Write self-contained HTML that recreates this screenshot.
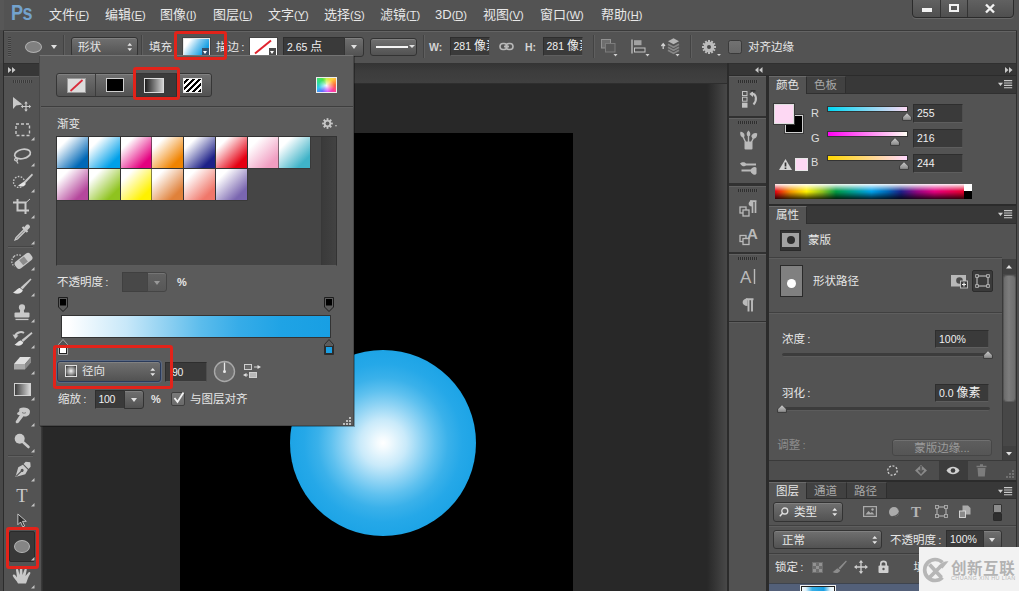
<!DOCTYPE html>
<html lang="zh-CN">
<head>
<meta charset="utf-8">
<title>Photoshop 渐变填充</title>
<style>
*{box-sizing:border-box;margin:0;padding:0}
html,body{width:1019px;height:591px;overflow:hidden;background:#535353}
body{position:relative;font-family:"Liberation Sans","Noto Sans CJK SC",sans-serif;font-size:11.500px;color:#e6e6e6;line-height:1}
.a{position:absolute}
.t{position:absolute;white-space:nowrap;line-height:14px;height:14px}
.inp{position:absolute;font-size:10.500px;background:#3a3a3a;border:1px solid #2e2e2e;border-bottom-color:#5e5e5e;border-right-color:#4e4e4e;color:#f0f0f0;line-height:16px;padding-left:3px;white-space:nowrap;overflow:hidden}
.btn{position:absolute;background:linear-gradient(#707070,#525252);border:1px solid #333;border-radius:3px;box-shadow:inset 0 1px 0 rgba(255,255,255,.12)}
.tri{position:absolute;width:0;height:0;border-left:3px solid transparent;border-right:3px solid transparent;border-top:4px solid #e0e0e0}
svg{position:absolute;overflow:visible}
.mi{top:7px;font-size:13px;line-height:15px;height:15px;color:#e8e8e8}
.mi .k{font-size:11px}
.mi u{text-underline-offset:1px}
.red{border:3px solid #e2231a;border-radius:3px}
.sw{width:31px;height:30.800px;box-shadow:0 0 0 .6px #333}
.inp .c{font-size:12px}
.cl{margin-left:2.200px}
</style>
</head>
<body>
<svg width="0" height="0" style="left:0;top:0"><defs><linearGradient id="tg" x1="0" y1="0" x2="0" y2="1"><stop offset="0" stop-color="#cfcfcf"/><stop offset="1" stop-color="#868686"/></linearGradient></defs></svg>

<!-- ===== MENU BAR ===== -->
<div class="a" id="menubar" style="left:0;top:0;width:1019px;height:30px;background:#535353">
<div class="a" style="left:0;top:0;width:4px;height:30px;background:#575757"></div>
<div class="t" style="left:10.500px;top:0.500px;height:24px;line-height:24px;font-size:22px;font-weight:bold;color:#73a2cd;letter-spacing:-.5px;transform:scaleX(.82);transform-origin:0 0;font-family:'Liberation Sans',sans-serif">Ps</div>
<div class="t mi" style="left:49px">文件<span class="k">(<u>F</u>)</span></div>
<div class="t mi" style="left:105px">编辑<span class="k">(<u>E</u>)</span></div>
<div class="t mi" style="left:160px">图像<span class="k">(<u>I</u>)</span></div>
<div class="t mi" style="left:213px">图层<span class="k">(<u>L</u>)</span></div>
<div class="t mi" style="left:268px">文字<span class="k">(<u>Y</u>)</span></div>
<div class="t mi" style="left:324px">选择<span class="k">(<u>S</u>)</span></div>
<div class="t mi" style="left:380px">滤镜<span class="k">(<u>T</u>)</span></div>
<div class="t mi" style="left:435px">3D<span class="k">(<u>D</u>)</span></div>
<div class="t mi" style="left:483px">视图<span class="k">(<u>V</u>)</span></div>
<div class="t mi" style="left:540px">窗口<span class="k">(<u>W</u>)</span></div>
<div class="t mi" style="left:601px">帮助<span class="k">(<u>H</u>)</span></div>
<div class="a" style="left:912px;top:-1px;width:102px;height:19px;border:1px solid #2b2b2b;border-radius:0 0 4px 4px;background:linear-gradient(#616161,#4f4f4f);box-shadow:0 1px 0 rgba(255,255,255,.12)"></div>
<div class="a" style="left:940px;top:0;width:1px;height:17px;background:#333"></div>
<div class="a" style="left:967px;top:0;width:1px;height:17px;background:#333"></div>
<div class="a" style="left:922px;top:8px;width:10px;height:3.500px;background:#f2f2f2"></div>
<div class="a" style="left:948.500px;top:3.500px;width:10.500px;height:8.500px;border:2px solid #f2f2f2"></div>
<svg style="left:985px;top:4px" width="10" height="9" viewBox="0 0 10 9"><path d="M1 0.5 L9 8.5 M9 0.5 L1 8.5" stroke="#f2f2f2" stroke-width="2.4" fill="none"/></svg>
</div>

<!-- ===== OPTIONS BAR ===== -->
<div class="a" id="optbar" style="left:0;top:30px;width:1019px;height:33px;background:#535353">
<div class="a" style="left:0;top:0;width:3px;height:33px;background:#4b4b4b"></div><div class="a" style="left:3px;top:0;width:1px;height:33px;background:#2c2c2c"></div>
<div class="a" style="left:1017px;top:0;width:2px;height:33px;background:#4f4f4f"></div><div class="a" style="left:1016px;top:0;width:1px;height:33px;background:#2e2e2e"></div>
<div class="a" style="left:3px;top:0;width:1014px;height:1px;background:#3a3a3a"></div><div class="a" style="left:4px;top:1px;width:1012px;height:1px;background:#646464"></div>
<div class="a" style="left:4px;top:32.500px;width:1012px;height:.5px;background:#3a3a3a"></div>
<!-- gripper -->
<div class="a" style="left:8px;top:7px;width:3px;height:20px;background:repeating-linear-gradient(#3e3e3e 0 1px,#5e5e5e 1px 2px)"></div>
<!-- ellipse tool icon -->
<div class="a" style="left:25px;top:10.500px;width:17px;height:12px;border-radius:50%;background:#808080;border:1.300px solid #b0b0b0"></div>
<div class="tri" style="left:51px;top:15px"></div>
<div class="a" style="left:63px;top:5px;width:1px;height:23px;background:#434343"></div><div class="a" style="left:64px;top:5px;width:1px;height:23px;background:#5f5f5f"></div><div class="a" style="left:141px;top:5px;width:1px;height:23px;background:#434343"></div><div class="a" style="left:142px;top:5px;width:1px;height:23px;background:#5f5f5f"></div>
<!-- shape dropdown -->
<div class="btn" style="left:71px;top:7px;width:67px;height:20px"></div>
<div class="t" style="left:78px;top:10px">形状</div>
<svg style="left:127.3px;top:13.0px" width="5.500" height="8" viewBox="0 0 7 10"><path d="M3.5 0 L6.5 3.5 H0.5Z M3.5 10 L6.5 6.5 H0.5Z" fill="#e6e6e6"/></svg>
<div class="t" style="left:149px;top:10px">填充<span class="cl">:</span></div>
<!-- fill swatch -->
<div class="a" style="left:182.500px;top:8px;width:27px;height:17.500px;border:1px solid #e8e8e8;outline:1px solid #444;background:linear-gradient(125deg,#fff 18%,#7cc8ef 50%,#149fe3 80%)"></div>
<div class="a" style="left:202px;top:18px;width:7px;height:7px;background:#35506a"></div>
<div class="tri" style="left:203px;top:20.500px;border-width:3px 2.500px 0 2.500px;border-top-color:#fff"></div>
<div class="t" style="left:216px;top:10px">描边<span class="cl">:</span></div>
<!-- stroke swatch -->
<div class="a" style="left:250px;top:8px;width:27px;height:17.500px;border:1px solid #fff;outline:1px solid #444;background:#fff"></div>
<svg style="left:250px;top:8px" width="27" height="18" viewBox="0 0 27 18"><path d="M5 15.5 L21 2.5" stroke="#e0232e" stroke-width="2"/></svg>
<div class="a" style="left:269px;top:18px;width:7px;height:7px;background:#4a4a4a"></div>
<div class="tri" style="left:270px;top:20.500px;border-width:3px 2.500px 0 2.500px;border-top-color:#fff"></div>
<!-- size input -->
<div class="inp" style="left:283px;top:7px;width:62px;height:19.500px;line-height:18px">2.65 <span class="c">点</span></div>
<div class="btn" style="left:344px;top:7px;width:20px;height:19.500px;border-radius:0 3px 3px 0"></div>
<div class="tri" style="left:351px;top:15px"></div>
<!-- line style -->
<div class="btn" style="left:370px;top:8px;width:47px;height:18px"></div>
<div class="a" style="left:376px;top:16px;width:32px;height:2px;background:#f4f4f4"></div>
<div class="tri" style="left:409px;top:15px;border-width:3px 3px 0 3px"></div>
<div class="a" style="left:423px;top:5px;width:1px;height:23px;background:#434343"></div><div class="a" style="left:424px;top:5px;width:1px;height:23px;background:#5f5f5f"></div>
<div class="t" style="left:429px;top:10px;font-weight:bold;font-size:10.500px;color:#d4d4d4">W:</div>
<div class="inp" style="left:449.500px;top:7px;width:40.500px;height:18.500px;line-height:17px">281 <span class="c">像素</span></div>
<!-- link icon -->
<svg style="left:499px;top:12px" width="15" height="9" viewBox="0 0 15 9"><rect x="1" y="1.5" width="7" height="6" rx="3" fill="none" stroke="#b8b8b8" stroke-width="1.6"/><rect x="7" y="1.5" width="7" height="6" rx="3" fill="none" stroke="#b8b8b8" stroke-width="1.6"/><rect x="5" y="3.6" width="5" height="1.8" fill="#b8b8b8"/></svg>
<div class="t" style="left:525px;top:10px;font-weight:bold;font-size:10.500px;color:#d4d4d4">H:</div>
<div class="inp" style="left:542.500px;top:7px;width:40.500px;height:18.500px;line-height:17px">281 <span class="c">像素</span></div>
<div class="a" style="left:593px;top:5px;width:1px;height:23px;background:#434343"></div><div class="a" style="left:594px;top:5px;width:1px;height:23px;background:#5f5f5f"></div>
<!-- path ops icon -->
<svg style="left:601px;top:9px" width="18" height="18" viewBox="0 0 18 18"><rect x="0.500" y="0.500" width="9" height="8.500" fill="#6e6e6e" stroke="#929292"/><rect x="4.500" y="4.500" width="9.500" height="8.500" fill="#585858" stroke="#7c7c7c"/><path d="M12.500 15 h4 l-2 2.500z" fill="#d0d0d0"/></svg>
<!-- align icon -->
<svg style="left:631px;top:9px" width="18" height="18" viewBox="0 0 18 18"><path d="M1 0.500 V14.500" stroke="#c0c0c0" stroke-width="1.300"/><rect x="3" y="1.200" width="7.500" height="5" fill="#a2a2a2"/><rect x="3.500" y="9" width="10.500" height="4" fill="#4e4e4e" stroke="#c4c4c4"/><path d="M14.500 15 h4 l-2 2.500z" fill="#d0d0d0"/></svg>
<!-- arrange icon -->
<svg style="left:661px;top:8px" width="20" height="19" viewBox="0 0 20 19"><path d="M2.200 6.500 V11 M0.400 8 L2.200 5.800 L4 8" stroke="#d4d4d4" stroke-width="1.200" fill="none"/><path d="M12.500 0.300 L18 3.300 L12.500 6.300 L7 3.300Z" fill="#b4b4b4"/><path d="M7 6.300 L12.500 9.300 L18 6.300 M7 9.300 L12.500 12.300 L18 9.300 M7 12.300 L12.500 15.300 L18 12.300" stroke="#868686" stroke-width="1.700" fill="none"/><path d="M14.500 16 h4 l-2 2.500z" fill="#d0d0d0"/></svg>
<div class="a" style="left:690px;top:5px;width:1px;height:23px;background:#434343"></div><div class="a" style="left:691px;top:5px;width:1px;height:23px;background:#5f5f5f"></div>
<!-- gear -->
<svg style="left:701px;top:8.500px" width="16" height="16" viewBox="-8 -8 16 16"><g fill="#bcbcbc"><circle r="5.400"/><rect x="-1" y="-7" width="2" height="14" transform="rotate(0)"/><rect x="-1" y="-7" width="2" height="14" transform="rotate(30)"/><rect x="-1" y="-7" width="2" height="14" transform="rotate(60)"/><rect x="-1" y="-7" width="2" height="14" transform="rotate(90)"/><rect x="-1" y="-7" width="2" height="14" transform="rotate(120)"/><rect x="-1" y="-7" width="2" height="14" transform="rotate(150)"/></g><circle r="2" fill="#4a4a4a"/></svg>
<div class="a" style="left:717px;top:24px;width:0;height:0;border-left:2px solid transparent;border-right:2px solid transparent;border-top:2.500px solid #d0d0d0"></div>
<!-- checkbox -->
<div class="a" style="left:728px;top:9.500px;width:14px;height:14px;border:1px solid #3a3a3a;border-radius:2.500px;background:linear-gradient(#727272,#686868)"></div>
<div class="t" style="left:748px;top:10px">对齐边缘</div>
</div>

<!-- ===== WORK AREA ===== -->
<div class="a" id="work" style="left:38px;top:63px;width:691px;height:528px;background:#282828">
<div class="a" style="left:0;top:0;width:691px;height:1px;background:#2a2a2a"></div>
<div class="a" style="left:0;top:0;width:689px;height:20px;background:linear-gradient(#343434,#3c3c3c 40%,#404040)"></div>
<div class="a" style="left:0;top:20px;width:689px;height:1px;background:#2e2e2e"></div>
<!-- document -->
<div class="a" style="left:142px;top:70px;width:393px;height:458px;background:#000"></div>
<div class="a" style="left:252px;top:287px;width:186px;height:186px;border-radius:50%;background:radial-gradient(circle closest-side,#fff 0%,#f4fbfe 6%,#c9eafa 25%,#8ed3f4 42%,#5fc1ef 56%,#3ab1ea 70%,#25a8e8 85%,#1da4e6 100%)"></div>
<!-- v scrollbar -->
<div class="a" style="left:669px;top:21px;width:20px;height:507px;background:linear-gradient(90deg,#282828 0,#333 35%,#3f3f3f 70%,#484848 100%)"></div>
<div class="a" style="left:689px;top:0;width:2px;height:528px;background:linear-gradient(90deg,#3a3a3a,#2c2c2c)"></div>
</div>

<!-- ===== TOOLBAR ===== -->
<div class="a" id="tools" style="left:0;top:63px;width:40.500px;height:528px;background:#535353">
<div class="a" style="left:0;top:0;width:3px;height:528px;background:#484848"></div><div class="a" style="left:3px;top:0;width:1px;height:528px;background:#2c2c2c"></div>
<div class="a" style="left:4px;top:0;width:36.500px;height:13px;background:#373737;border-top:1px solid #303030"></div>
<svg style="left:8px;top:4px" width="8" height="6" viewBox="0 0 8 6"><path d="M0 0 L3.5 3 L0 6Z M4 0 L7.5 3 L4 6Z" fill="#c8c8c8"/></svg>
<div class="a" style="left:4px;top:13px;width:36.500px;height:1px;background:#626262"></div>
<div class="a" style="left:13px;top:17px;width:19px;height:3px;background:repeating-linear-gradient(90deg,#3a3a3a 0 1px,#5f5f5f 1px 2px)"></div>
<div class="a" style="left:40.500px;top:0px;width:2px;height:528px;background:linear-gradient(90deg,#3e3e3e,#2c2c2c)"></div>
<svg style="left:13px;top:34px" width="18" height="14" viewBox="0 0 18 14"><path d="M0 0 L0 12 L3.2 8.6 L9.5 7.5Z" fill="#c9c9c9"/><path d="M13 5.5 V13.5 M9 9.5 H17" stroke="#c9c9c9" stroke-width="1.2"/><path d="M13 4.3 l1.8 2.2 h-3.6z M13 14.7 l1.8 -2.2 h-3.6z M7.8 9.5 l2.2 -1.8 v3.6z M18.2 9.5 l-2.2 -1.8 v3.6z" fill="#c9c9c9"/></svg>
<svg style="left:14.500px;top:60px" width="16" height="14" viewBox="0 0 16 14"><rect x="1" y="1" width="13.5" height="11.5" fill="none" stroke="#c9c9c9" stroke-width="1.4" stroke-dasharray="3 2"/></svg>
<svg style="left:30.500px;top:73.5px" width="3.500" height="3.500" viewBox="0 0 4 4"><path d="M4 0 V4 H0Z" fill="#c4c4c4"/></svg>
<svg style="left:12px;top:85px" width="20" height="16" viewBox="0 0 20 16"><ellipse cx="10.5" cy="6" rx="8" ry="4.6" fill="none" stroke="#c9c9c9" stroke-width="1.7" transform="rotate(-12 10.5 6)"/><path d="M4.5 9.5 C2 10.5 2 13 4.5 12.8 C6 12.5 5.5 10.5 4 11 M4.5 12.8 L6 15.5" fill="none" stroke="#c9c9c9" stroke-width="1.3"/></svg>
<svg style="left:30.500px;top:99.5px" width="3.500" height="3.500" viewBox="0 0 4 4"><path d="M4 0 V4 H0Z" fill="#c4c4c4"/></svg>
<svg style="left:12px;top:110px" width="22" height="16" viewBox="0 0 22 16"><ellipse cx="7" cy="9" rx="5.5" ry="5.5" fill="none" stroke="#c9c9c9" stroke-width="1.3" stroke-dasharray="1.6 1.4"/><path d="M20 0.5 L11.5 9 L13 10.5 L21 2Z" fill="#c9c9c9"/><path d="M12 9 C10 9.5 8.5 11.5 6 12.5 C9 14.5 13 13.5 13.8 10.8Z" fill="#e6e6e6"/></svg>
<svg style="left:30.500px;top:125.5px" width="3.500" height="3.500" viewBox="0 0 4 4"><path d="M4 0 V4 H0Z" fill="#c4c4c4"/></svg>
<svg style="left:13px;top:136px" width="18" height="16" viewBox="0 0 18 16"><path d="M4.5 0 V11.5 H16 M0 3.5 H12.5 V15" fill="none" stroke="#c9c9c9" stroke-width="2"/><path d="M17 0 L12.5 4" stroke="#c9c9c9" stroke-width="1"/></svg>
<svg style="left:30.500px;top:151.5px" width="3.500" height="3.500" viewBox="0 0 4 4"><path d="M4 0 V4 H0Z" fill="#c4c4c4"/></svg>
<svg style="left:13px;top:161px" width="18" height="17" viewBox="0 0 18 17"><path d="M13.5 0.8 C15.5 -0.5 18 2 16.5 4 L14 6.5 L11 3.5Z" fill="#c9c9c9"/><path d="M9.5 3 L14.5 8" stroke="#c9c9c9" stroke-width="2"/><path d="M11 5.5 L3 13.5 L2 16 L4.5 15 L12.5 7Z" fill="#8a8a8a" stroke="#c9c9c9" stroke-width="1.2"/></svg>
<svg style="left:30.500px;top:177.5px" width="3.500" height="3.500" viewBox="0 0 4 4"><path d="M4 0 V4 H0Z" fill="#c4c4c4"/></svg>
<div class="a" style="left:8px;top:183px;width:25px;height:1px;background:#454545"></div><div class="a" style="left:8px;top:184px;width:25px;height:1px;background:#606060"></div>
<svg style="left:11px;top:190px" width="22" height="17" viewBox="0 0 22 17"><g transform="rotate(-38 12 8)"><rect x="3" y="4" width="19" height="8.5" rx="3" fill="#c9c9c9"/><rect x="9.5" y="5" width="6" height="6.5" fill="#8c8c8c"/></g><path d="M3 3.5 C0 6 0 11 3.5 13.5" fill="none" stroke="#c9c9c9" stroke-width="1.2" stroke-dasharray="1.5 1.3"/><path d="M3 3.5 C5 1.5 8 1.5 10 2.5" fill="none" stroke="#c9c9c9" stroke-width="1.2" stroke-dasharray="1.5 1.3"/></svg>
<svg style="left:30.500px;top:203.5px" width="3.500" height="3.500" viewBox="0 0 4 4"><path d="M4 0 V4 H0Z" fill="#c4c4c4"/></svg>
<svg style="left:12px;top:215px" width="20" height="17" viewBox="0 0 20 17"><path d="M18.5 0.5 L8.5 9.5 L10.5 11.5 L19.5 1.5Z" fill="#c9c9c9"/><path d="M8 10 C5.5 10 4.5 12.5 1 14.5 C5 16.8 10 15.5 10.8 12.3Z" fill="#e2e2e2"/></svg>
<svg style="left:30.500px;top:229.5px" width="3.500" height="3.500" viewBox="0 0 4 4"><path d="M4 0 V4 H0Z" fill="#c4c4c4"/></svg>
<svg style="left:13px;top:241px" width="18" height="17" viewBox="0 0 18 17"><circle cx="9" cy="3.400" r="3.100" fill="#c9c9c9"/><path d="M7.300 5 L6.800 9 H11.200 L10.700 5Z" fill="#c9c9c9"/><rect x="1.500" y="8.500" width="15" height="5" rx="1" fill="#c9c9c9"/><rect x="2.500" y="14.800" width="13" height="1.300" fill="#c9c9c9"/></svg>
<svg style="left:30.500px;top:255.5px" width="3.500" height="3.500" viewBox="0 0 4 4"><path d="M4 0 V4 H0Z" fill="#c4c4c4"/></svg>
<svg style="left:12px;top:267px" width="21" height="17" viewBox="0 0 21 17"><path d="M19.5 2 L9.5 10 L11 12 L20.500 3.500Z" fill="#c9c9c9"/><path d="M9 10.500 C6.500 10.500 5.500 13 2.500 14.500 C6 16.800 10.500 15.500 11.300 12.500Z" fill="#e2e2e2"/><path d="M3 6.500 C4 2.500 9 1 12 3" fill="none" stroke="#c9c9c9" stroke-width="2"/><path d="M0.500 4.500 L3.200 9 L6.500 5.500Z" fill="#c9c9c9"/></svg>
<svg style="left:30.500px;top:281.5px" width="3.500" height="3.500" viewBox="0 0 4 4"><path d="M4 0 V4 H0Z" fill="#c4c4c4"/></svg>
<svg style="left:13px;top:293px" width="19" height="15" viewBox="0 0 19 15"><path d="M7 1 L18 1 L12 8 L1 8Z" fill="#e0e0e0"/><path d="M1 8 L12 8 L12 13.500 L1 13.500Z" fill="#a8a8a8"/><path d="M12 8 L18 1 L18 6.500 L12 13.500Z" fill="#8a8a8a"/></svg>
<svg style="left:30.500px;top:307.5px" width="3.500" height="3.500" viewBox="0 0 4 4"><path d="M4 0 V4 H0Z" fill="#c4c4c4"/></svg>
<div class="a" style="left:14px;top:320px;width:17px;height:13px;border:1px solid #d2d2d2;background:linear-gradient(90deg,#3c3c3c,#d8d8d8)"></div>
<svg style="left:30.500px;top:333.5px" width="3.500" height="3.500" viewBox="0 0 4 4"><path d="M4 0 V4 H0Z" fill="#c4c4c4"/></svg>
<svg style="left:13px;top:344px" width="18" height="17" viewBox="0 0 18 17"><path d="M7 1.200 C9.500 -0.300 16 0.300 16.800 3.500 C17.600 7.500 15 9.800 11.500 9.500 L10.500 9.300 L5.500 15.800 C4.300 17 2 15.800 2.800 14.200 L6.800 8 C4.500 8.500 3.500 7 4.500 5.800 C5.500 4.800 6.500 4.800 6.300 3.500 C6.200 2.500 6 1.800 7 1.200Z" fill="#c9c9c9"/><path d="M9 5.500 C10.500 6.500 12 6.300 13 5.500" stroke="#7a7a7a" stroke-width="1" fill="none"/></svg>
<svg style="left:30.500px;top:359.5px" width="3.500" height="3.500" viewBox="0 0 4 4"><path d="M4 0 V4 H0Z" fill="#c4c4c4"/></svg>
<svg style="left:13px;top:369px" width="19" height="17" viewBox="0 0 19 17"><circle cx="6.700" cy="6.700" r="5" fill="#c9c9c9"/><path d="M10.500 10.500 L15.500 15" stroke="#c9c9c9" stroke-width="2.600" stroke-linecap="round"/></svg>
<svg style="left:30.500px;top:385.5px" width="3.500" height="3.500" viewBox="0 0 4 4"><path d="M4 0 V4 H0Z" fill="#c4c4c4"/></svg>
<div class="a" style="left:8px;top:392px;width:25px;height:1px;background:#454545"></div><div class="a" style="left:8px;top:393px;width:25px;height:1px;background:#606060"></div>
<svg style="left:13px;top:398px" width="19" height="18" viewBox="0 0 19 18"><g transform="rotate(45 9.500 9)"><path d="M9.500 -2 L13 1 V4 H6 V1Z" fill="#c9c9c9"/><path d="M6 5 H13 L14.500 10 L9.500 19 L4.500 10Z" fill="#c9c9c9"/><path d="M9.500 18 V10.500" stroke="#535353" stroke-width="1.200"/><circle cx="9.500" cy="9.500" r="1.500" fill="#535353"/></g></svg>
<svg style="left:30.500px;top:414.5px" width="3.500" height="3.500" viewBox="0 0 4 4"><path d="M4 0 V4 H0Z" fill="#c4c4c4"/></svg>
<div class="t" style="left:14px;top:422px;width:16px;height:22px;line-height:22px;font-size:18.500px;font-family:'Liberation Serif',serif;color:#c9c9c9;text-align:center">T</div>
<svg style="left:30.500px;top:439.5px" width="3.500" height="3.500" viewBox="0 0 4 4"><path d="M4 0 V4 H0Z" fill="#c4c4c4"/></svg>
<svg style="left:16.500px;top:450px" width="11" height="15" viewBox="0 0 13 17"><path d="M1 0.800 L1 13.500 L4.200 10.300 L6.800 16 L9 15 L6.500 9.500 L11 9.500Z" fill="#2f2f2f" stroke="#c9c9c9" stroke-width="1.100"/></svg>
<div class="a" style="left:9px;top:468px;width:26px;height:31px;background:#383838;border:1px solid #2a2a2a;border-radius:2px"></div>
<div class="a" style="left:14px;top:477px;width:16px;height:13px;border-radius:50%;background:#858585;border:1.400px solid #b4b4b4"></div>
<svg style="left:30.500px;top:493.5px" width="3.500" height="3.500" viewBox="0 0 4 4"><path d="M4 0 V4 H0Z" fill="#c4c4c4"/></svg>
<svg style="left:12px;top:504px" width="20" height="17" viewBox="0 0 20 17"><path d="M6 16.500 C4.500 13 2 11.500 0.800 9 C0.500 7.500 2.500 7 3.500 8.500 L5 10.500 L4 3 C4 1.500 6 1.500 6.300 3 L7.500 8 L8 1.500 C8.200 0 10.300 0 10.300 1.500 L10.500 8 L12.500 2.500 C13 1 15 1.500 14.700 3 L13.500 9 L16.500 5.500 C17.500 4.500 19 5.500 18.200 6.800 C16 10 15.500 13 14 16.500Z" fill="#c9c9c9"/></svg>
<svg style="left:30.500px;top:521.5px" width="3.500" height="3.500" viewBox="0 0 4 4"><path d="M4 0 V4 H0Z" fill="#c4c4c4"/></svg>
</div>

<!-- ===== RIGHT PANELS ===== -->
<div class="a" id="right" style="left:727px;top:63px;width:292px;height:528px;background:#2b2b2b">
<div class="a" style="left:290px;top:0;width:2px;height:528px;background:#4f4f4f"></div><div class="a" style="left:289px;top:0;width:1px;height:528px;background:#2e2e2e"></div>
<!-- header strip -->
<div class="a" style="left:2px;top:0;width:287px;height:13px;background:#363636;border-top:1px solid #303030;border-bottom:1px solid #2b2b2b"></div>
<svg style="left:28px;top:4px" width="8" height="6" viewBox="0 0 8 6"><path d="M3.500 0 L0 3 L3.500 6Z M7.500 0 L4 3 L7.500 6Z" fill="#c8c8c8"/></svg>
<svg style="left:278px;top:4px" width="8" height="6" viewBox="0 0 8 6"><path d="M0 0 L3.500 3 L0 6Z M4 0 L7.500 3 L4 6Z" fill="#c8c8c8"/></svg>
<!-- icon strip -->
<div class="a" style="left:2px;top:13px;width:37px;height:515px;background:#313131"></div>
<div class="a" style="left:2px;top:259px;width:37px;height:269px;background:#525252;border-top:1px solid #5e5e5e"></div>
<div class="a" style="left:2px;top:13px;width:37px;height:39.5px;background:#535353;border-top:1px solid #626262"></div>
<div class="a" style="left:11px;top:17px;width:20px;height:3px;background:repeating-linear-gradient(90deg,#2e2e2e 0 1px,#585858 1px 2px)"></div>
<svg style="left:14.500px;top:28px" width="17" height="18" viewBox="0 0 17 18"><rect x="0.500" y="0.500" width="4.500" height="4" fill="none" stroke="#c2c2c2" stroke-width="1"/><rect x="0.500" y="6.200" width="4.500" height="4" fill="none" stroke="#c2c2c2" stroke-width="1"/><rect x="0" y="11.700" width="5.500" height="5" fill="#c2c2c2"/><path d="M9 2.800 C14.500 2 15.500 9 11.500 13.500" fill="none" stroke="#c2c2c2" stroke-width="2.100"/><path d="M7.300 3 L11 0.300 L11 6Z" fill="#c2c2c2"/><rect x="8.500" y="-0.800" width="5" height="1.300" fill="#2e2e2e"/></svg>
<div class="a" style="left:2px;top:54.5px;width:37px;height:65.8px;background:#535353;border-top:1px solid #626262"></div>
<div class="a" style="left:11px;top:58px;width:20px;height:3px;background:repeating-linear-gradient(90deg,#2e2e2e 0 1px,#585858 1px 2px)"></div>
<svg style="left:13px;top:68px" width="17" height="19" viewBox="0 0 17 19"><rect x="4.500" y="10.500" width="8" height="8" rx="1" fill="#bababa"/><path d="M8.500 11 V3.500 M8.500 0.500 C10 2 10 4 8.500 5 C7 4 7 2 8.500 0.500Z M5.500 11 L2.500 4.500 M1 1.500 C3.500 2 4.500 4 3.500 6 C1.500 5.500 0.500 3.500 1 1.500Z M11.500 11 L14 6 M12 5 C13 3 15 2.500 16.500 3 C16.500 5.500 15 7 13 7Z" fill="#bababa" stroke="#bababa" stroke-width="1.400"/></svg>
<svg style="left:13px;top:97px" width="17" height="17" viewBox="0 0 17 17"><path d="M0 3.500 C2 1.500 5 2 6 3.500 L16 3.500 V5.500 L6 5.500 C4.500 7 2 6.500 0 3.500Z" fill="#bababa"/><path d="M1.500 9.500 H11 V11.500 H1.500Z" fill="#bababa"/><path d="M10.500 10.500 C11 7.500 15.500 6 16.500 8 V13.500 C15 16.500 11 14 10.500 10.500Z" fill="#bababa"/></svg>
<div class="a" style="left:2px;top:122.5px;width:37px;height:66.1px;background:#535353;border-top:1px solid #626262"></div>
<div class="a" style="left:11px;top:126px;width:20px;height:3px;background:repeating-linear-gradient(90deg,#2e2e2e 0 1px,#585858 1px 2px)"></div>
<svg style="left:12px;top:137px" width="18" height="17" viewBox="0 0 18 17"><rect x="1" y="7" width="6" height="6" fill="none" stroke="#bababa" stroke-width="1.300"/><rect x="4" y="10" width="6" height="6" fill="#535353" stroke="#bababa" stroke-width="1.300"/><path d="M13 0.500 C9 0.500 8 6.500 13 6.500 Z" fill="#bababa"/><path d="M13.500 0.500 V13 M16.500 0.500 V13 M11 1.200 H17.500" stroke="#bababa" stroke-width="1.700" fill="none"/></svg>
<svg style="left:12px;top:164px" width="19" height="18" viewBox="0 0 19 18"><rect x="1" y="8.500" width="6" height="6" fill="none" stroke="#bababa" stroke-width="1.300"/><rect x="4" y="11.500" width="6" height="6" fill="#535353" stroke="#bababa" stroke-width="1.300"/><text x="8" y="11.500" font-family="Liberation Sans,sans-serif" font-weight="bold" font-size="15" fill="#bababa">A</text></svg>
<div class="a" style="left:2px;top:190.5px;width:37px;height:67.0px;background:#535353;border-top:1px solid #626262"></div>
<div class="a" style="left:11px;top:194px;width:20px;height:3px;background:repeating-linear-gradient(90deg,#2e2e2e 0 1px,#585858 1px 2px)"></div>
<svg style="left:13px;top:205px" width="18" height="17" viewBox="0 0 18 17"><text x="0" y="14.500" font-family="Liberation Sans,sans-serif" font-size="17" fill="#bababa">A</text><path d="M14.500 1 V16" stroke="#bababa" stroke-width="1.400"/></svg>
<svg style="left:14px;top:235px" width="13" height="14" viewBox="0 0 13 14"><path d="M6.500 0.500 C0 0.500 0 8 6.500 8Z" fill="#bababa"/><path d="M7.500 0.500 V13.500 M11 0.500 V13.500 M5 1.300 H12.500" stroke="#bababa" stroke-width="1.900" fill="none"/></svg>
<!-- colour panel -->
<div class="a" id="colorpanel" style="left:42px;top:13px;width:247px;height:128px;background:#535353">
</div>
<div class="a" style="left:42px;top:13px;width:247px;height:18px;background:#383838;border-bottom:1px solid #303030"></div>
<div class="a" style="left:42px;top:13px;width:38px;height:18px;background:#535353;border-top:1px solid #6a6a6a;border-right:1px solid #2e2e2e"></div>
<div class="a" style="left:80px;top:13px;width:39px;height:17px;background:#414141;border-top:1px solid #4e4e4e;border-right:1px solid #2e2e2e"></div>
<div class="t" style="left:49px;top:15px">颜色</div>
<div class="t" style="left:87px;top:15px;color:#a8a8a8">色板</div>
<svg style="left:271px;top:17px" width="14" height="8" viewBox="0 0 14 8"><path d="M0 2.800 h5 l-2.500 3.200z" fill="#d0d0d0"/><path d="M6 0.600 h8.200 M6 3 h8.200 M6 5.400 h8.200 M6 7.800 h8.200" stroke="#cacaca" stroke-width="1.100"/></svg>

<div class="a" style="left:58px;top:52px;width:18px;height:18px;background:#000;border:1px solid #d0d0d0;outline:1px solid #3a3a3a"></div>
<div class="a" style="left:47px;top:41px;width:19.500px;height:19.500px;background:#fdd8f3;border:1px solid #e0e0e0;outline:1px solid #3a3a3a"></div>
<div class="t" style="left:84px;top:42.5px;font-size:11px;color:#dedede">R</div>
<div class="t" style="left:84px;top:67.5px;font-size:11px;color:#dedede">G</div>
<div class="t" style="left:84px;top:91.5px;font-size:11px;color:#dedede">B</div>
<div class="a" style="left:100px;top:43px;width:81px;height:6px;border:1px solid #333;background:linear-gradient(90deg,#00d8f4,#fdd8f4)"></div>
<div class="a" style="left:100px;top:68px;width:81px;height:6px;border:1px solid #333;background:linear-gradient(90deg,#ff00f4,#fffff4)"></div>
<div class="a" style="left:100px;top:92px;width:81px;height:6px;border:1px solid #333;background:linear-gradient(90deg,#ffd800,#ffd8ff)"></div>
<svg style="left:175px;top:49.0px" width="10" height="9" viewBox="0 0 10 9"><path d="M5 0.600 L9.400 5 V8.400 H0.600 V5Z" fill="url(#tg)" stroke="#333" stroke-width=".9"/></svg>
<svg style="left:163px;top:74.0px" width="10" height="9" viewBox="0 0 10 9"><path d="M5 0.600 L9.400 5 V8.400 H0.600 V5Z" fill="url(#tg)" stroke="#333" stroke-width=".9"/></svg>
<svg style="left:172px;top:98.0px" width="10" height="9" viewBox="0 0 10 9"><path d="M5 0.600 L9.400 5 V8.400 H0.600 V5Z" fill="url(#tg)" stroke="#333" stroke-width=".9"/></svg>

<div class="inp" style="left:186px;top:41px;width:50px;height:19px;line-height:17px">255</div>
<div class="inp" style="left:186px;top:66px;width:50px;height:19px;line-height:17px">216</div>
<div class="inp" style="left:186px;top:91px;width:50px;height:19px;line-height:17px">244</div>
<svg style="left:52px;top:96px" width="13" height="11" viewBox="0 0 13 11"><path d="M6.500 0 L13 11 H0Z" fill="#d4d4d4"/><path d="M6.500 3.500 V7.500 M6.500 8.500 V10" stroke="#333" stroke-width="1.700"/></svg>
<div class="a" style="left:68px;top:95px;width:13px;height:13px;background:#fdd8f3;border:1px solid #e8e8e8"></div>
<!-- spectrum -->
<div class="a" style="left:48px;top:120.500px;width:197px;height:15.500px;background:linear-gradient(180deg,rgba(255,255,255,.95) 0,rgba(255,255,255,0) 48%,rgba(0,0,0,0) 52%,rgba(0,0,0,.78) 100%),linear-gradient(90deg,#e60012 0,#f39800 8%,#fff100 16%,#8fc31f 24%,#009944 31%,#009e96 40%,#00a0e9 49%,#0068b7 57%,#1d2088 64%,#920783 72%,#e4007f 81%,#e5004f 90%,#e60012 100%)"></div>
<div class="a" style="left:237px;top:120.500px;width:8px;height:7.500px;background:#fff"></div>
<div class="a" style="left:237px;top:128px;width:8px;height:8px;background:#000"></div>
<!-- properties panel -->
<div class="a" style="left:42px;top:143px;width:247px;height:274px;background:#535353"></div>
<div class="a" style="left:42px;top:143px;width:247px;height:18px;background:#383838;border-bottom:1px solid #303030"></div>
<div class="a" style="left:42px;top:143px;width:38px;height:18px;background:#535353;border-top:1px solid #6a6a6a;border-right:1px solid #2e2e2e"></div>
<div class="t" style="left:49px;top:145px">属性</div>
<svg style="left:271px;top:147px" width="14" height="8" viewBox="0 0 14 8"><path d="M0 2.800 h5 l-2.500 3.200z" fill="#d0d0d0"/><path d="M6 0.600 h8.200 M6 3 h8.200 M6 5.400 h8.200 M6 7.800 h8.200" stroke="#cacaca" stroke-width="1.100"/></svg>

<div class="a" style="left:53px;top:167px;width:21px;height:21px;background:#333;border:1px solid #2a2a2a"></div>
<div class="a" style="left:55px;top:170px;width:17px;height:14px;background:#a2a2a2"></div>
<div class="a" style="left:60px;top:173px;width:8px;height:8px;border-radius:50%;background:#2e2e2e"></div>
<div class="t" style="left:81px;top:170px">蒙版</div>
<div class="a" style="left:42px;top:194px;width:233px;height:1px;background:#404040"></div>
<div class="a" style="left:42px;top:195px;width:233px;height:1px;background:#5e5e5e"></div>
<div class="a" style="left:53px;top:202px;width:23px;height:32px;background:#808080;border:1px solid #2a2a2a"></div>
<div class="a" style="left:60px;top:215.5px;width:9px;height:9px;border-radius:50%;background:#fff"></div>
<div class="t" style="left:86px;top:211px">形状路径</div>
<!-- add mask icons -->
<svg style="left:223.500px;top:212px" width="17" height="14" viewBox="0 0 17 14"><rect x="0" y="0" width="15" height="11.500" fill="#b8b8b8"/><circle cx="8.500" cy="5.500" r="3.300" fill="#4c4c4c"/><rect x="9.500" y="6" width="7" height="7" fill="#3c3c3c" stroke="#c4c4c4" stroke-width=".9"/><path d="M13 7.500 V11.500 M11 9.500 H15" stroke="#f0f0f0" stroke-width="1.200"/></svg>
<div class="a" style="left:245px;top:207px;width:21px;height:22px;background:#3a3a3a;border:1px solid #2c2c2c;border-radius:2px"></div>
<svg style="left:248px;top:211px" width="15" height="14" viewBox="0 0 15 14"><rect x="2" y="2" width="11" height="10" fill="none" stroke="#cacaca" stroke-width="1"/><g fill="#3a3a3a" stroke="#cacaca" stroke-width=".8"><rect x="0.700" y="0.700" width="2.600" height="2.600"/><rect x="11.700" y="0.700" width="2.600" height="2.600"/><rect x="0.700" y="10.700" width="2.600" height="2.600"/><rect x="11.700" y="10.700" width="2.600" height="2.600"/></g></svg>
<!-- scrollbar -->
<div class="a" style="left:275px;top:196px;width:14px;height:202px;background:#474747;border-left:1px solid #3a3a3a"></div>
<div class="a" style="left:276px;top:196px;width:13px;height:15px;background:#404040"></div>
<svg style="left:279.29999999999995px;top:201.5px" width="6" height="3.500" viewBox="0 0 6 3.500"><path d="M3 0 L6 3.500 H0Z" fill="#e0e0e0"/></svg>
<div class="a" style="left:276px;top:212px;width:13px;height:127px;background:linear-gradient(90deg,#686868,#7c7c7c 45%,#6c6c6c);border-radius:4px;box-shadow:inset 0 0 0 1px rgba(50,50,50,.35)"></div>
<div class="a" style="left:276px;top:383px;width:13px;height:15px;background:#404040"></div>
<svg style="left:279.29999999999995px;top:389px" width="6" height="3.500" viewBox="0 0 6 3.500"><path d="M0 0 H6 L3 3.500Z" fill="#e0e0e0"/></svg>
<div class="a" style="left:42px;top:249px;width:233px;height:1px;background:#404040"></div>
<div class="a" style="left:42px;top:250px;width:233px;height:1px;background:#5e5e5e"></div>
<div class="t" style="left:55px;top:269px">浓度<span class="cl">:</span></div>
<div class="inp" style="left:208px;top:267px;width:54px;height:18px;line-height:16px">100%</div>
<div class="a" style="left:55px;top:290px;width:208px;height:4px;border-radius:2px;background:#3c3c3c;border-bottom:1px solid #5c5c5c"></div>
<svg style="left:256px;top:287px" width="10" height="9" viewBox="0 0 10 9"><path d="M5 0.600 L9.400 5 V8.400 H0.600 V5Z" fill="url(#tg)" stroke="#333" stroke-width=".9"/></svg>

<div class="t" style="left:55px;top:323px">羽化<span class="cl">:</span></div>
<div class="inp" style="left:208px;top:321px;width:54px;height:18px;line-height:16px">0.0 <span class="c">像素</span></div>
<div class="a" style="left:55px;top:344px;width:208px;height:4px;border-radius:2px;background:#3c3c3c;border-bottom:1px solid #5c5c5c"></div>
<svg style="left:50px;top:341px" width="10" height="9" viewBox="0 0 10 9"><path d="M5 0.600 L9.400 5 V8.400 H0.600 V5Z" fill="url(#tg)" stroke="#333" stroke-width=".9"/></svg>

<div class="t" style="left:50.299999999999955px;top:375px;color:#8c8c8c">调整<span class="cl">:</span></div>
<div class="btn" style="left:165px;top:376px;width:100px;height:17px;background:linear-gradient(#5e5e5e,#555);border-color:#464646"></div>
<div class="t" style="left:165px;top:378px;width:100px;text-align:center;color:#9a9a9a">蒙版边缘...</div>
<!-- bottom icon bar -->
<div class="a" style="left:42px;top:397px;width:247px;height:20px;background:#4d4d4d;border-top:1px solid #3a3a3a"></div>
<div class="a" style="left:211.5px;top:398px;width:29px;height:19px;background:#3c3c3c"></div>
<svg style="left:159.5px;top:401.5px" width="11" height="11" viewBox="0 0 11 11"><circle cx="5.500" cy="5.500" r="4.700" fill="none" stroke="#d0d0d0" stroke-width="1.300" stroke-dasharray="2 1.600"/></svg>
<svg style="left:187px;top:401px" width="14" height="13" viewBox="0 0 14 13"><path d="M7 1 L13 6.500 L7 12 L1 6.500Z" fill="#8a8a8a"/><path d="M7 2 V8 M4.500 6 L7 9 L9.500 6" stroke="#535353" stroke-width="1.500" fill="none"/></svg>
<svg style="left:219px;top:403px" width="14" height="9" viewBox="0 0 14 9"><path d="M0.500 4.500 C3.500 -0.500 10.500 -0.500 13.500 4.500 C10.500 9.500 3.500 9.500 0.500 4.500Z" fill="#d0d0d0"/><circle cx="7" cy="4.500" r="2.300" fill="#3c3c3c"/></svg>
<svg style="left:249px;top:401px" width="11" height="13" viewBox="0 0 11 13"><path d="M1.500 4 H9.500 L8.800 12.500 H2.200Z" fill="#7c7c7c"/><path d="M0.500 2.500 H10.500 M4 1 H7" stroke="#7c7c7c" stroke-width="1.600"/></svg>
<svg style="left:279px;top:407px" width="8" height="8" viewBox="0 0 8 8"><g fill="#707070"><rect x="6" y="0" width="2" height="2"/><rect x="3" y="3" width="2" height="2"/><rect x="6" y="3" width="2" height="2"/><rect x="0" y="6" width="2" height="2"/><rect x="3" y="6" width="2" height="2"/><rect x="6" y="6" width="2" height="2"/></g></svg>
<!-- layers panel -->
<div class="a" style="left:42px;top:419px;width:247px;height:109px;background:#535353"></div>
<div class="a" style="left:42px;top:419px;width:247px;height:17px;background:#383838;border-bottom:1px solid #303030"></div>
<div class="a" style="left:42px;top:419px;width:38px;height:17px;background:#535353;border-top:1px solid #6a6a6a;border-right:1px solid #2e2e2e"></div>
<div class="a" style="left:80px;top:419px;width:40px;height:16px;background:#414141;border-top:1px solid #4e4e4e;border-right:1px solid #2e2e2e"></div>
<div class="a" style="left:120px;top:419px;width:40px;height:16px;background:#414141;border-top:1px solid #4e4e4e;border-right:1px solid #2e2e2e"></div>
<div class="t" style="left:49px;top:421px">图层</div>
<div class="t" style="left:87px;top:421px;color:#a8a8a8">通道</div>
<div class="t" style="left:127px;top:421px;color:#a8a8a8">路径</div>
<svg style="left:271px;top:424px" width="14" height="8" viewBox="0 0 14 8"><path d="M0 2.800 h5 l-2.500 3.200z" fill="#d0d0d0"/><path d="M6 0.600 h8.200 M6 3 h8.200 M6 5.400 h8.200 M6 7.800 h8.200" stroke="#cacaca" stroke-width="1.100"/></svg>

<div class="btn" style="left:46px;top:439px;width:70px;height:20px"></div>
<svg style="left:52px;top:444px" width="10" height="10" viewBox="0 0 10 10"><circle cx="5.800" cy="4" r="3" fill="none" stroke="#e0e0e0" stroke-width="1.300"/><path d="M3.800 6 L0.800 9.200" stroke="#e0e0e0" stroke-width="1.500"/></svg>
<div class="t" style="left:67px;top:442px">类型</div>
<svg style="left:105.3px;top:445.0px" width="5.500" height="8" viewBox="0 0 6 10"><path d="M3 0 L6 3.500 H0Z M3 10 L6 6.500 H0Z" fill="#e6e6e6"/></svg>
<svg style="left:136px;top:443px" width="14" height="11" viewBox="0 0 14 11"><rect x="0.600" y="0.600" width="12.800" height="9.800" fill="none" stroke="#ababab" stroke-width="1.200"/><path d="M2.500 8.500 L5.500 5 L7.500 7 L9 6 L11.500 8.500Z" fill="#ababab"/><circle cx="9.500" cy="3.500" r="1.200" fill="#ababab"/></svg>
<svg style="left:161px;top:443px" width="12" height="12" viewBox="0 0 12 12"><circle cx="6" cy="6" r="5" fill="#ababab"/><path d="M6 1 A5 5 0 0 1 6 11 A7 7 0 0 0 9.500 2.500Z" fill="#535353" transform="rotate(40 6 6)"/></svg>
<div class="t" style="left:184px;top:440px;height:18px;line-height:18px;font-size:15px;font-weight:bold;font-family:'Liberation Serif',serif;color:#b4b4b4">T</div>
<svg style="left:208px;top:442px" width="13" height="13" viewBox="0 0 13 13"><rect x="2" y="2" width="9" height="9" fill="none" stroke="#ababab" stroke-width="1.200"/><g fill="#5b5b5b" stroke="#ababab" stroke-width=".9"><rect x="0.500" y="0.500" width="3" height="3"/><rect x="9.500" y="0.500" width="3" height="3"/><rect x="0.500" y="9.500" width="3" height="3"/><rect x="9.500" y="9.500" width="3" height="3"/></g></svg>
<svg style="left:232px;top:442px" width="12" height="13" viewBox="0 0 12 13"><path d="M3.500 0.500 H9 L11.500 3 V9.500 H3.500Z" fill="#ababab"/><rect x="0.500" y="6" width="6" height="6.500" fill="#8a8a8a" stroke="#dcdcdc" stroke-width=".9"/></svg>
<div class="a" style="left:266px;top:441px;width:9px;height:9px;background:#8c8c8c;border:1px solid #333;border-radius:1px"></div>
<div class="a" style="left:266px;top:450px;width:9px;height:8px;background:#2e2e2e;border:1px solid #2a2a2a;border-radius:1px"></div>
<div class="a" style="left:42px;top:462px;width:247px;height:1px;background:#404040"></div>
<div class="a" style="left:42px;top:463px;width:247px;height:1px;background:#5e5e5e"></div>
<div class="btn" style="left:46px;top:467px;width:109px;height:19px"></div>
<div class="t" style="left:55px;top:470px">正常</div>
<svg style="left:145.3px;top:473.0px" width="5.500" height="8" viewBox="0 0 6 10"><path d="M3 0 L6 3.500 H0Z M3 10 L6 6.500 H0Z" fill="#e6e6e6"/></svg>
<div class="t" style="left:163px;top:470px">不透明度<span class="cl">:</span></div>
<div class="inp" style="left:219px;top:467px;width:38px;height:19px;line-height:17px">100%</div>
<div class="btn" style="left:256px;top:467px;width:19px;height:19px;border-radius:0 3px 3px 0"></div>
<div class="tri" style="left:262px;top:475px"></div>
<div class="a" style="left:42px;top:490px;width:247px;height:1px;background:#3e3e3e"></div><div class="a" style="left:42px;top:491px;width:247px;height:1px;background:#5c5c5c"></div>
<div class="t" style="left:48px;top:497px">锁定<span class="cl">:</span></div>
<svg style="left:85px;top:499px" width="11" height="11" viewBox="0 0 11 11"><rect width="11" height="11" fill="#6e6e6e"/><g fill="#929292"><rect x="1" y="1" width="3" height="3"/><rect x="7" y="1" width="3" height="3"/><rect x="4" y="4" width="3" height="3"/><rect x="1" y="7" width="3" height="3"/><rect x="7" y="7" width="3" height="3"/></g></svg>
<svg style="left:105px;top:497px" width="15" height="14" viewBox="0 0 15 14"><path d="M14 0.500 L6.500 8 L8 9.500 L14.800 1.500Z" fill="#8c8c8c"/><path d="M6 8.500 C4 8.500 3.500 10.500 0.500 12 C3.500 14 7.500 13 8.200 10.500Z" fill="#8c8c8c"/></svg>
<svg style="left:127px;top:497px" width="14" height="14" viewBox="0 0 14 14"><path d="M7 1.500 V12.500 M1.500 7 H12.500" stroke="#d0d0d0" stroke-width="1.300"/><path d="M7 0 l2.200 2.800 h-4.400z M7 14 l2.200 -2.800 h-4.400z M0 7 l2.800 -2.200 v4.400z M14 7 l-2.800 -2.200 v4.400z" fill="#d0d0d0"/></svg>
<svg style="left:151px;top:497px" width="11" height="13" viewBox="0 0 11 13"><path d="M2.800 6 V3.800 C2.800 0.500 8.200 0.500 8.200 3.800 V6" fill="none" stroke="#d0d0d0" stroke-width="1.600"/><rect x="0.500" y="5.500" width="10" height="7.500" rx="1" fill="#d0d0d0"/><circle cx="5.500" cy="9" r="1.200" fill="#535353"/></svg>
<div class="t" style="left:186.5px;top:497px">填充<span class="cl">:</span></div>
<!-- layer row -->
<div class="a" style="left:42px;top:520px;width:247px;height:8px;background:#536079;border-top:1px solid #3e444e"></div>
<div class="a" style="left:73px;top:521.5px;width:36px;height:7px;background:#222;border:1px solid #f0f0f0;border-bottom:none"></div>
<div class="a" style="left:75px;top:524px;width:32px;height:4px;background:linear-gradient(90deg,#f4fbfe 0,#dff2fb 12%,#39afe6 32%,#1a9fe3 68%,#dff2fb 88%,#f4fbfe 100%)"></div>
</div>

<!-- ===== GRADIENT POPUP ===== -->
<div class="a" id="popup" style="left:39px;top:55px;width:315px;height:371px;background:#5b5b5b;border:1px solid #474747;border-top-color:#747474;border-left-color:#484848;box-shadow:1px 1px 0 rgba(0,0,0,.3)">
<div class="a" style="left:0px;top:-1px;width:314px;height:372px"> 
<!-- fill type buttons -->
<div class="btn" style="left:16px;top:18px;width:156px;height:24px;border-color:#363636"></div>
<div class="a" style="left:95px;top:19px;width:42px;height:22px;background:#3b3b3b"></div>
<div class="a" style="left:55px;top:19px;width:1px;height:22px;background:#3c3c3c"></div>
<div class="a" style="left:94px;top:19px;width:1px;height:22px;background:#2e2e2e"></div>
<div class="a" style="left:136px;top:19px;width:1px;height:22px;background:#2e2e2e"></div>
<!-- none -->
<div class="a" style="left:27px;top:22.500px;width:18.500px;height:15px;border:1px solid #9a9a9a;background:#dcdcdc"></div>
<svg style="left:27px;top:22.500px" width="19" height="15" viewBox="0 0 19 15"><path d="M3.500 13 L15.500 2" stroke="#d92b3a" stroke-width="1.700"/></svg>
<!-- solid -->
<div class="a" style="left:65.500px;top:22.500px;width:18.500px;height:14.500px;border:1px solid #cfcfcf;background:#000"></div>
<!-- gradient -->
<div class="a" style="left:104px;top:23px;width:20px;height:15px;border:1px solid #dcdcdc;background:linear-gradient(90deg,#1c1c1c,#d0d0d0)"></div>
<!-- pattern -->
<div class="a" style="left:143px;top:23px;width:19px;height:15px;border:1px solid #e8e8e8;background:repeating-linear-gradient(135deg,#fff 0 1.800px,#000 1.800px 4.200px)"></div>
<!-- colour picker -->
<div class="a" style="left:276px;top:22px;width:21px;height:16px;border:1px solid #eee;background:radial-gradient(ellipse at 50% 55%,rgba(255,255,255,.95) 0,rgba(255,255,255,.5) 25%,rgba(255,255,255,0) 60%),conic-gradient(from 0deg at 50% 50%,#c8f050,#ffd23c 45deg,#ff6a3c 90deg,#ff3c9c 130deg,#d84cff 170deg,#5a6cff 215deg,#30c8f0 250deg,#30e090 290deg,#4ce04c 325deg,#c8f050 360deg)"></div>
<!-- separator -->
<div class="a" style="left:1px;top:51px;width:312px;height:1px;background:#3e3e3e"></div>
<div class="a" style="left:1px;top:52px;width:312px;height:1px;background:#626262"></div>
<div class="t" style="left:17px;top:62px">渐变</div>
<svg style="left:282px;top:62.500px" width="11" height="11" viewBox="-6 -6 12 12"><g fill="#c8c8c8"><circle r="3.900"/><rect x="-1" y="-5.800" width="2" height="11.600"/><rect x="-1" y="-5.800" width="2" height="11.600" transform="rotate(45)"/><rect x="-1" y="-5.800" width="2" height="11.600" transform="rotate(90)"/><rect x="-1" y="-5.800" width="2" height="11.600" transform="rotate(135)"/></g><circle r="2.100" fill="#5b5b5b"/></svg>
<div class="tri" style="left:294.500px;top:70px;border-width:2px 1.500px 0 1.500px;border-top-color:#bbb"></div>
<!-- preset list -->
<div class="a" style="left:16px;top:81px;width:281px;height:130px;background:#454545;border:1px solid #333;border-bottom-color:#5c5c5c"></div>
<div class="a" style="left:281px;top:82px;width:15px;height:128px;background:linear-gradient(90deg,#3a3a3a,#424242);border-left:1px solid #383838"></div>
<div class="a sw" style="left:17.00px;top:82.10px;background:linear-gradient(135deg,#fff 20%,#0068b7 80%)"></div>
<div class="a sw" style="left:48.75px;top:82.10px;background:linear-gradient(135deg,#fff 20%,#00a0e9 80%)"></div>
<div class="a sw" style="left:80.50px;top:82.10px;background:linear-gradient(135deg,#fff 20%,#e4007f 80%)"></div>
<div class="a sw" style="left:112.25px;top:82.10px;background:linear-gradient(135deg,#fff 20%,#f08300 80%)"></div>
<div class="a sw" style="left:144.00px;top:82.10px;background:linear-gradient(135deg,#fff 20%,#1d2088 80%)"></div>
<div class="a sw" style="left:175.75px;top:82.10px;background:linear-gradient(135deg,#fff 20%,#e60012 80%)"></div>
<div class="a sw" style="left:207.50px;top:82.10px;background:linear-gradient(135deg,#fff 20%,#f19ec2 80%)"></div>
<div class="a sw" style="left:239.25px;top:82.10px;background:linear-gradient(135deg,#fff 20%,#3fb3c8 80%)"></div>
<div class="a sw" style="left:17.00px;top:113.85px;background:linear-gradient(135deg,#fff 20%,#b5479c 80%)"></div>
<div class="a sw" style="left:48.75px;top:113.85px;background:linear-gradient(135deg,#fff 20%,#8fc31f 80%)"></div>
<div class="a sw" style="left:80.50px;top:113.85px;background:linear-gradient(135deg,#fff 20%,#fff100 80%)"></div>
<div class="a sw" style="left:112.25px;top:113.85px;background:linear-gradient(135deg,#fff 20%,#e0813a 80%)"></div>
<div class="a sw" style="left:144.00px;top:113.85px;background:linear-gradient(135deg,#fff 20%,#f0776a 80%)"></div>
<div class="a sw" style="left:175.75px;top:113.85px;background:linear-gradient(135deg,#fff 20%,#7a66b0 80%)"></div>
<!-- opacity row -->
<div class="t" style="left:17px;top:220px">不透明度<span class="cl">:</span></div>
<div class="a" style="left:82px;top:217px;width:26px;height:20px;background:#484848;border:1px solid #404040;border-right:none"></div>
<div class="btn" style="left:107px;top:217px;width:20px;height:20px;border-radius:0 3px 3px 0;background:linear-gradient(#626262,#575757);border-color:#454545"></div>
<div class="tri" style="left:114px;top:226px;border-top-color:#999"></div>
<div class="t" style="left:137px;top:220px;font-weight:bold;font-size:11px">%</div>
<!-- gradient stops (top) -->
<svg style="left:18px;top:242px" width="10" height="15" viewBox="0 0 10 15"><path d="M0.500 0.500 H9.500 V10 L5 14.500 L0.500 10Z" fill="#5b5b5b" stroke="#1e1e1e"/><rect x="2" y="2" width="6" height="6.500" fill="#000"/></svg>
<svg style="left:284px;top:242px" width="10" height="15" viewBox="0 0 10 15"><path d="M0.500 0.500 H9.500 V10 L5 14.500 L0.500 10Z" fill="#5b5b5b" stroke="#1e1e1e"/><rect x="2" y="2" width="6" height="6.500" fill="#000"/></svg>
<!-- gradient bar -->
<div class="a" style="left:21px;top:259.500px;width:270px;height:23px;border:1px solid #333;background:linear-gradient(90deg,#fff 0,#fdfeff 3%,#c8e8f9 24%,#8bcff1 40%,#5bbcec 52%,#36ace8 66%,#1fa3e5 82%,#189fe3 100%)"></div>
<!-- gradient stops (bottom) -->
<svg style="left:18px;top:284px" width="10" height="16" viewBox="0 0 10 16"><path d="M5 0.500 L9.500 5.500 V15.500 H0.500 V5.500Z" fill="#535353" stroke="#ababab"/><rect x="1.500" y="7.500" width="7" height="7" fill="#fff" stroke="#222"/></svg>
<svg style="left:284px;top:284px" width="10" height="16" viewBox="0 0 10 16"><path d="M5 0.500 L9.500 5.500 V15.500 H0.500 V5.500Z" fill="#5b5b5b" stroke="#2c2c2c"/><rect x="1.500" y="7.500" width="7" height="7" fill="#1a9fe3" stroke="#2c2c2c"/></svg>
<!-- style dropdown -->
<div class="btn" style="left:17px;top:306px;width:104px;height:21px;border-color:#2a3a5a;box-shadow:inset 0 1px 0 rgba(255,255,255,.12),0 0 0 1px rgba(90,130,200,.35)"></div>
<div class="a" style="left:25px;top:310px;width:12px;height:12px;border:1px solid #e0e0e0;background:radial-gradient(circle,#f0f0f0 0,#9a9a9a 45%,#2a2a2a 100%)"></div>
<div class="t" style="left:42px;top:309px;font-size:11.500px">径向</div>
<svg style="left:110.3px;top:313.0px" width="5.500" height="8" viewBox="0 0 6 10"><path d="M3 0 L6 3.500 H0Z M3 10 L6 6.500 H0Z" fill="#e6e6e6"/></svg>
<!-- angle -->
<div class="inp" style="left:125px;top:307px;width:42px;height:20px;line-height:18px;padding-left:6px;letter-spacing:-.4px">90</div>
<svg style="left:173px;top:305px" width="23" height="23" viewBox="0 0 23 23"><circle cx="11.500" cy="11.500" r="10" fill="#707070" stroke="#a8a8a8" stroke-width="1.400"/><path d="M11.500 11.500 V2.500" stroke="#e8e8e8" stroke-width="1.300"/><circle cx="11.500" cy="11.500" r="1.500" fill="#e8e8e8"/></svg>
<!-- reverse -->
<svg style="left:204px;top:309px" width="18" height="14" viewBox="0 0 18 14"><rect x="0.500" y="0.500" width="7" height="5" fill="#6a6a6a" stroke="#cfcfcf"/><rect x="5.500" y="8.500" width="7" height="5" fill="#b8b8b8" stroke="#cfcfcf"/><path d="M10 3 H14.500 M1 11 H4" stroke="#cfcfcf" stroke-width="1.200"/><path d="M13.500 1 L17 3 L13.500 5Z M2.500 9 L-1 11 L2.500 13Z" fill="#e0e0e0"/></svg>
<!-- scale row -->
<div class="t" style="left:18px;top:337px">缩放<span class="cl">:</span></div>
<div class="inp" style="left:55px;top:335px;width:30px;height:19px;line-height:17px;padding-left:2.500px;letter-spacing:-.4px">100</div>
<div class="btn" style="left:84px;top:335px;width:20px;height:19px;border-radius:0 3px 3px 0"></div>
<div class="tri" style="left:91px;top:343px"></div>
<div class="t" style="left:111px;top:337px;font-weight:bold;font-size:11px">%</div>
<div class="a" style="left:131px;top:337px;width:14px;height:14px;border:1px solid #3f3f3f;border-radius:2px;background:linear-gradient(#7a7a7a,#6a6a6a)"></div>
<svg style="left:132px;top:336px" width="14" height="14" viewBox="0 0 14 14"><path d="M2.500 7 L5.500 11 L11.500 1.500" fill="none" stroke="#f4f4f4" stroke-width="1.800"/></svg>
<div class="t" style="left:150px;top:337px">与图层对齐</div>
<!-- resize grip -->
<svg style="left:303px;top:362px" width="8" height="8" viewBox="0 0 8 8"><g fill="#bdbdbd"><rect x="6" y="0" width="2" height="2"/><rect x="3" y="3" width="2" height="2"/><rect x="6" y="3" width="2" height="2"/><rect x="0" y="6" width="2" height="2"/><rect x="3" y="6" width="2" height="2"/><rect x="6" y="6" width="2" height="2"/></g></svg>
</div>
</div>

<!-- ===== RED ANNOTATIONS ===== -->
<div class="a red" style="left:174px;top:31px;width:53px;height:29px"></div>
<div class="a red" style="left:132.500px;top:66.500px;width:47.500px;height:33px"></div>
<div class="a red" style="left:53px;top:345px;width:120px;height:44px"></div>
<div class="a red" style="left:5.500px;top:526.500px;width:33px;height:42px"></div>

<!-- ===== WATERMARK ===== -->
<div class="a" style="left:919px;top:547px;width:100px;height:44px;background:#f2f2f2">
<svg style="left:1.500px;top:9.800px" width="28" height="26" viewBox="0 0 28 26"><path d="M21.500 5.500 A10.500 10.500 0 1 0 21.500 20.500" fill="none" stroke="#b6b6b6" stroke-width="3.700"/><path d="M8.500 7.500 L20.500 20.500 M8.500 20.500 L20 9" stroke="#b6b6b6" stroke-width="3.800" fill="none"/><path d="M17.500 9 C20 5.500 24 4 27.500 4.300 L21.500 11.500Z" fill="#b6b6b6"/></svg>
<div class="t" style="left:32px;top:13px;height:17px;line-height:17px;font-size:15.500px;font-weight:bold;color:#b2b2b2;letter-spacing:.55px">创新互联</div>
<div class="t" style="left:32px;top:28px;height:6px;line-height:6px;font-size:5.500px;color:#b8b8b8;letter-spacing:.38px;font-family:'Liberation Sans',sans-serif">CHUANG XIN HU LIAN</div>
</div>

</body>
</html>
